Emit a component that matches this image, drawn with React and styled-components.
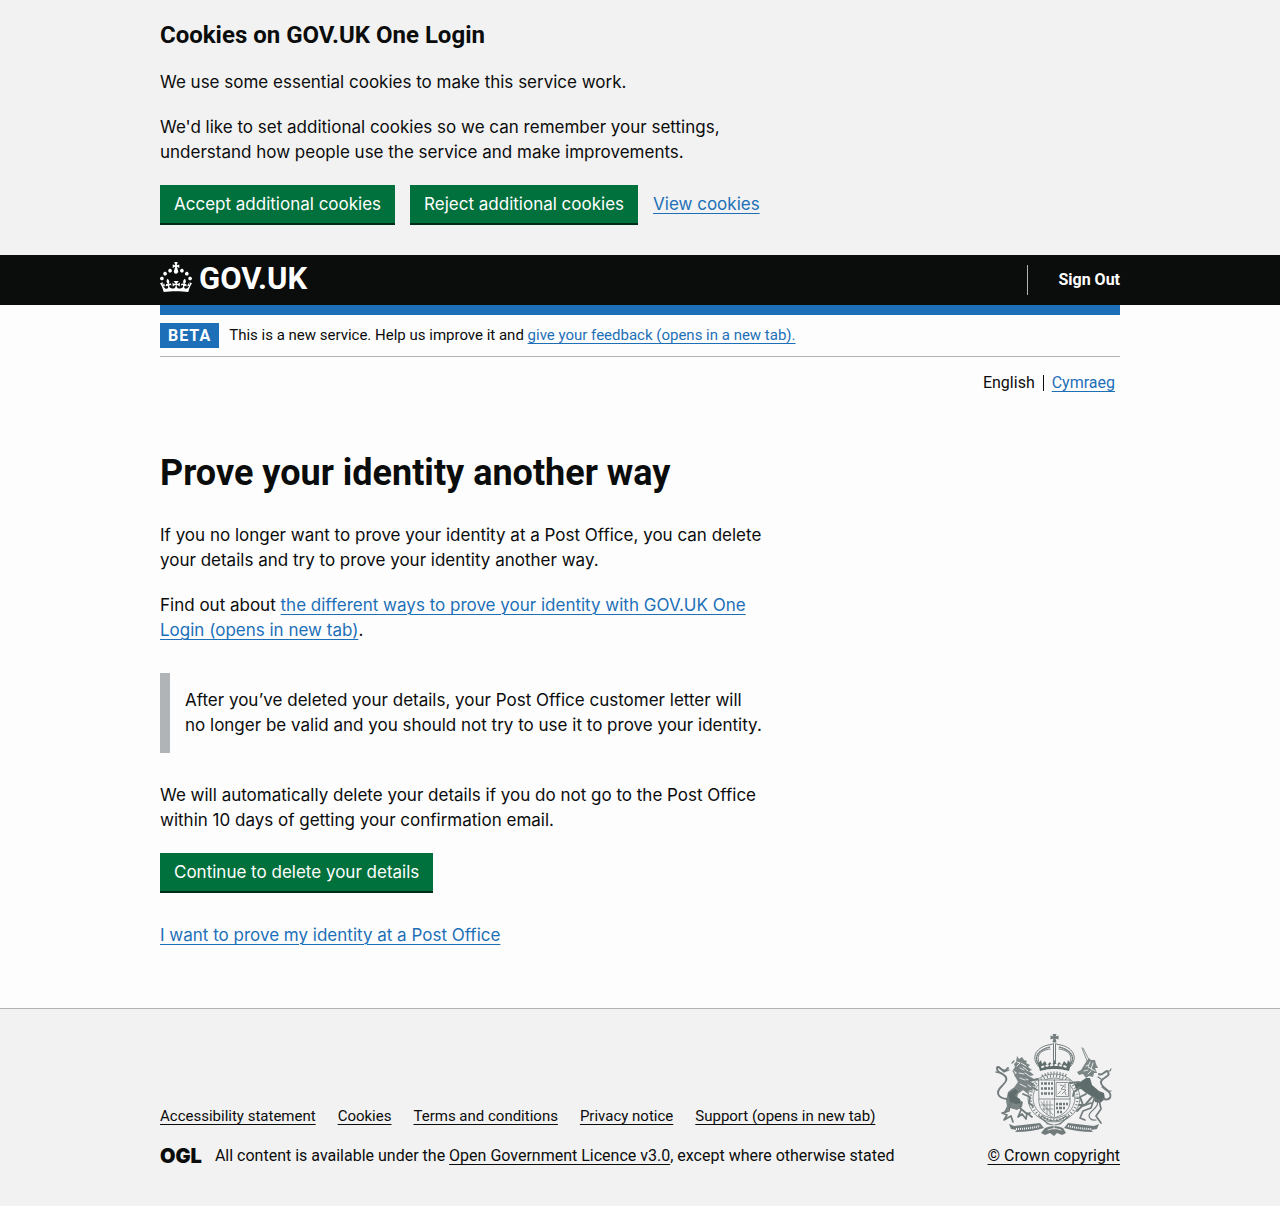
import React from "react";
import styled, { createGlobalStyle } from "styled-components";

const ink = "#0b0c0c";
const blue = "#1d70b8";
const green = "#00703c";
const grey = "#f2f2f2";
const line = "#b1b4b6";
const compactFont = 'Roboto, "Liberation Sans", sans-serif';

const GlobalStyle = createGlobalStyle`
  *, *::before, *::after { box-sizing: border-box; }
  body {
    margin: 0;
    background: ${grey};
    color: ${ink};
    font-family: Inter, "Liberation Sans", sans-serif;
    font-size: 17px;
    line-height: 25px;
  }
`;

const Page = styled.div`
  background: #fdfdfd;
`;

const Container = styled.div`
  max-width: 1020px;
  margin: 0 auto;
  padding: 0 30px;
`;

const Column = styled.div`
  max-width: 610px;
`;

const Paragraph = styled.p`
  margin: 0 0 20px;
`;

const Link = styled.a`
  color: ${(p) => (p.$dark ? ink : blue)};
  text-decoration: underline;
  text-decoration-thickness: 1px;
  text-underline-offset: 3px;
`;

const Button = styled.button`
  height: 38px;
  margin: 0 0 2px;
  padding: 0 14px;
  border: 0;
  background: ${green};
  color: #fff;
  box-shadow: 0 2px 0 #002d18;
  font: inherit;
  cursor: pointer;
`;

const CookieBanner = styled.section`
  padding: 20px 0 30px;
  background: ${grey};
`;

const BannerTitle = styled.h2`
  margin: 0 0 20px;
  font-family: ${compactFont};
  font-size: 24px;
  line-height: 30px;
  font-weight: 700;
`;

const ButtonRow = styled.div`
  display: flex;
  flex-wrap: wrap;
  align-items: baseline;
  gap: 15px;
`;

const Header = styled.header`
  background: ${ink};
  font-family: ${compactFont};
`;

const HeaderRow = styled.div`
  display: flex;
  align-items: center;
  justify-content: space-between;
  height: 50px;
`;

const Logo = styled.a`
  display: flex;
  align-items: flex-start;
  gap: 7px;
  height: 30px;
  margin-bottom: 6px;
  color: #fff;
  font-size: 31px;
  line-height: 34px;
  font-weight: 700;
  text-decoration: none;
`;

const HeaderNav = styled.nav`
  padding: 5px 0 5px 30px;
  border-left: 1px solid ${line};
  font-size: 16px;
  line-height: 20px;
  font-weight: 700;
`;

const NavLink = styled.a`
  color: #fff;
  text-decoration: none;
`;

const BlueBar = styled.div`
  height: 10px;
  background: ${blue};
`;

const PhaseBanner = styled.div`
  display: flex;
  align-items: center;
  gap: 10px;
  padding: 8px 0;
  border-bottom: 1px solid ${line};
  font-family: ${compactFont};
  font-size: 15px;
`;

const Tag = styled.strong`
  padding: 0 8px;
  background: ${blue};
  color: #fff;
  font-size: 16px;
  line-height: 25px;
  letter-spacing: 1px;
  text-transform: uppercase;
`;

const LanguageNav = styled.nav`
  display: flex;
  justify-content: flex-end;
  padding: 18px 5px 0 0;
  font-family: ${compactFont};
  font-size: 16px;
  line-height: 16px;
`;

const Language = styled.span`
  & + & {
    margin-left: 8px;
    padding-left: 8px;
    border-left: 1px solid ${ink};
  }
`;

const Main = styled.main`
  padding: 62px 0 60px;
`;

const Title = styled.h1`
  margin: 0 0 30px;
  font-family: ${compactFont};
  font-size: 36px;
  line-height: 40px;
  font-weight: 700;
`;

const Inset = styled.div`
  margin: 30px 0;
  padding: 15px 0 15px 15px;
  border-left: 10px solid ${line};
`;

const ButtonBlock = styled.div`
  display: flex;
  margin-bottom: 30px;
`;

const LastParagraph = styled.p`
  margin: 0;
`;

const Footer = styled.footer`
  padding: 25px 0 40px;
  border-top: 1px solid ${line};
  background: ${grey};
  font-family: ${compactFont};
  font-size: 16px;
  line-height: 20px;
`;

const FooterRow = styled.div`
  display: flex;
  flex-wrap: wrap;
  align-items: flex-end;
  justify-content: space-between;
  gap: 30px;
`;

const FooterLinks = styled.ul`
  display: flex;
  flex-wrap: wrap;
  gap: 10px 22px;
  margin: 0 0 20px;
  padding: 0;
  font-size: 15px;
  list-style: none;
`;

const Licence = styled.div`
  display: flex;
  align-items: center;
  gap: 13px;
`;

const Ogl = styled.span`
  font-family: Inter, sans-serif;
  font-size: 20px;
  line-height: 20px;
  font-weight: 900;
`;

const Copyright = styled(Link)`
  display: flex;
  flex-direction: column;
  align-items: center;
  gap: 10px;
`;

function Crown() {
  return (
    <svg width="32" height="30" viewBox="0 0 32 30" fill="#fff" aria-hidden="true">
      <path d="M22.6 10.4c-1 .4-2-.1-2.4-1-.4-.9.1-2 1-2.4.9-.4 2 .1 2.4 1s-.1 2-1 2.4m4.9 3c-1 .4-2-.1-2.4-1-.4-.9.1-2 1-2.4.9-.4 2 .1 2.4 1s0 2-1 2.4m3.3 4.8c-1 .4-2-.1-2.4-1-.4-.9.1-2 1-2.4.9-.4 2 .1 2.4 1s-.1 2-1 2.4M17 4.700l2.300 1.200V2.500l-2.300.7-.2-.2.9-3h-3.400l.9 3-.2.2c-.1.1-2.300-.7-2.300-.7v3.400L15 4.700c.1.1.1.2.2.2l-1.300 4c-.1.2-.1.4-.1.6 0 1.100.8 2 1.900 2.200h.7c1-.2 1.900-1.100 1.900-2.100 0-.2 0-.4-.1-.6l-1.300-4c-.1-.2 0-.2.1-.3m-7.600 5.700c.9.4 2-.1 2.400-1 .4-.9-.1-2-1-2.400-.9-.4-2 .1-2.400 1s0 2 1 2.400m-5 3c.9.4 2-.1 2.400-1 .4-.9-.1-2-1-2.400-.9-.4-2 .1-2.400 1s.1 2 1 2.400m-3.200 4.800c.9.4 2-.1 2.400-1 .4-.9-.1-2-1-2.400-.9-.4-2 .1-2.400 1s0 2 1 2.400m14.800 11c4.4 0 8.6.3 12.3.8 1.1-4.5 2.4-7 3.7-8.8l-2.5-.9c.2 1.3.3 1.9 0 2.7-.4-.4-.8-1.1-1.1-2.3l-1.2 4c.7-.5 1.3-.8 2-.9-1.1 2.5-2.6 3.1-3.5 3-1.1-.2-1.7-1.2-1.5-2.1.3-1.2 1.5-1.5 2.1-.1 1.1-2.3-.8-3-2-2.3 1.9-1.9 2.1-3.5.6-5.6-2.1 1.6-2.1 3.2-1.2 5.5-1.2-1.4-3.2-.6-2.5 1.6.9-1.4 2.1-.5 1.9.8-.2 1.1-1.7 2.1-3.5 1.9-2.7-.2-2.9-2.1-2.9-3.6.7-.1 1.9.5 2.9 1.9l.4-4.3c-1.1 1.1-2.1 1.4-3.2 1.4.4-1.2 2.1-3 2.1-3h-5.4s1.7 1.9 2.1 3c-1.1 0-2.1-.2-3.2-1.4l.4 4.3c1-1.4 2.2-2 2.9-1.9-.1 1.5-.2 3.4-2.9 3.6-1.9.2-3.4-.8-3.5-1.9-.2-1.3 1-2.2 1.9-.8.7-2.3-1.2-3-2.5-1.6.9-2.2.9-3.9-1.2-5.5-1.5 2-1.3 3.7.6 5.6-1.2-.7-3.1 0-2 2.3.6-1.4 1.8-1.1 2.1.1.2.9-.3 1.9-1.5 2.1-.9.2-2.4-.5-3.5-3 .6 0 1.2.3 2 .9l-1.2-4c-.3 1.1-.7 1.9-1.1 2.3-.3-.8-.2-1.4 0-2.7l-2.9.9C1.3 23 2.6 25.5 3.7 30c3.7-.5 7.9-.8 12.3-.8" />
    </svg>
  );
}

function CoatOfArms() {
  return (
    <svg width="118" height="102" viewBox="0 0 118 102" fill="none" stroke="#727b7c" strokeWidth="1" strokeLinejoin="round" strokeLinecap="round" aria-hidden="true">
      {/* crown */}
      <g>
        <path d="M57.500 0h4l-1 2.500 3-1v4l-3-1 1 3.500h-4l1-3.500-3 1v-4l3 1z" fill="#727b7c" stroke="none" />
        <path d="M45 34C35 25 40 14 53 11q5 0 6.500-3 1.500 3 6.500 3c13 3 18 14 8 23" />
        <path d="M47 32c-8-8-3-16 8-17M72 32c8-8 3-16-8-17" />
        <path d="M46 33c-9-8-4-17 9-20M73 33c9-8 4-17-9-20" strokeWidth="1.500" strokeDasharray="1 1.500" />
        <path d="M58.500 10v18M60.500 10v18" />
        <path d="M42 26l2 3 2-3 1 4 3-3 2 4 3-3 2 3 2.500-5 2.500 5 2-3 3 3 2-4 3 3 1-4 2 3 2-3-3 11q-15-4-29 0z" fill="#5f6c6c" stroke="none" />
        <path d="M47 33q12-4 25 0" stroke="#f2f2f2" strokeWidth="2" strokeDasharray="1.500 3" />
        <path d="M46 37.500q13-4 27 0" stroke="#f2f2f2" strokeDasharray="3 2" />
      </g>
      {/* garter and shield */}
      <g>
        <path d="M47 42q12-6 25 0" strokeWidth="3" strokeDasharray="1 2" strokeLinecap="butt" />
        <ellipse cx="59" cy="64" rx="26" ry="24" strokeWidth=".8" />
        <ellipse cx="59" cy="64" rx="21" ry="20" strokeWidth=".8" />
        <ellipse cx="59" cy="64" rx="23.500" ry="22" strokeWidth="2.500" strokeDasharray="1 2.200" strokeLinecap="butt" />
        <path d="M44 46h31v23q-1 10-15.500 15Q45 79 44 69z" fill="#f2f2f2" strokeWidth=".8" />
        <path d="M59.500 46v37M44 65h31" strokeWidth=".8" />
        <path d="M46 49.500h12M46 54.500h12M46 59.500h12M61 70h12M61 74h10M62 78h5" strokeWidth="2.400" strokeDasharray="2 1 3 1" strokeLinecap="butt" />
        <path d="M61.500 48.500h12v14h-12zM65 51l4 1-3 3 5 1-4 4M66 57l-3 3M70 50v4M70 58l1 3" strokeWidth=".8" />
        <path d="M46 68l12 13M49 67v10M52 67v13M55 67v14M46 71h12M48 75h10" strokeWidth=".7" />
      </g>
      {/* lion */}
      <g>
        <path d="M22 22l2 3 3-2 2 3 3 1-1 2 4 2-2 2 4 3-3 1 5 4-4 1 5 4-4 1 5 5-5 0 2 5-4-1-1 4-5-4-5 4-1 5 6 3-1 5-5 3-7-2-4 5-2-1 3-6-1-5 2-9 6-5 4-5-2-4-2-3 3-2-4-3 2-3-1-3 2-2z" fill="#7b8585" stroke="none" />
        <path d="M13 60l7-5 3 2-3 5 5 3 1 4-5 1-6-2z" fill="#5f6c6c" stroke="none" />
        <path d="M22 28l3 1-3 3M25 34l4 2M26 29l5 3M28 33l5 4M24 39l5 1M30 39l6 4M25 44l5 2M31 45l6 3M25 50l6 3M33 51l5 3M18 54l3-4" stroke="#f2f2f2" strokeWidth=".9" />
        <path d="M34 47l9-2M37 53l5 3M28 60l7 3-1 6 4 3M26 68l-1 6 7 6 3-1" strokeWidth="1.800" />
        <path d="M15 69l-1 8-7 2 5 2-3 5 7-4 2 6M26 76l-3 7 4-3 4 5 1-6 5 4" strokeWidth="1.700" />
        <path d="M12 65C2 64 1 58 6 53s7-8 4-11-9-4-8-8 5 5 9 2l2-2" strokeWidth="1.900" />
        <path d="M1 38l5 1M4 33l5 5 5-2M19 27l-2 2M18 37l2 3" strokeWidth="1.300" />
      </g>
      {/* unicorn */}
      <g>
        <path d="M87 14l5 13M88 14l6 12" strokeWidth=".8" />
        <path d="M91 28l3-4 2 2 4 0 1 4 2 4-3 0 2 5-3 0-1 4-4-1-3 2-3-4-4 1-2-3 4-2z" fill="#7b8585" stroke="none" />
        <path d="M79 50l6-2 6-4 4 0 2 7 7 6 5 2 1 6-5 4-5-1-2-5-7-4-5-4-4 1z" fill="#5f6c6c" stroke="none" />
        <path d="M91 32l2-1M95 28l-2 5 4 2M98 29l-2 6 4 2M89 37l4-1M93 40l3-3" stroke="#f2f2f2" strokeWidth=".9" />
        <path d="M84 48l-9 1M85 53l-6 5-1 4M91 60l-6 3 3 8-6 6M97 63l-7 8-6 0" strokeWidth="1.900" />
        <path d="M104 66l2 9-5 7 5 7M99 65l-3 9-8 3-3 7 5 2M88 72l8-3" strokeWidth="1.700" />
        <path d="M108 65c8 2 10-4 4-9s-8-8-4-11 7-4 5-7-6 5-9 2" strokeWidth="1.900" />
        <path d="M111 37l4 0 1-2M106 45l-3-2M107 53l5 4 4 0M99 63c8 6 1 11-3 15s-1 9 5 8" strokeWidth="1.200" />
      </g>
      {/* compartment and motto ribbon */}
      <g>
        <path d="M47 82q12 10 24 0M44 82l9 8M74 82l-9 8M52 89q7 4 14 0" strokeWidth="1.200" />
        <path d="M14 90l5 2 26-3 4 5q-13 4-29 4l2-2-6-1zM104 90l-5 2-26-3-4 5q13 4 29 4l-2-2 6-1z" fill="#727b7c" stroke="none" />
        <path d="M21 95q12 0 24-3M73 92q12 3 24 3" stroke="#f2f2f2" strokeWidth="2" strokeDasharray="1 1" strokeLinecap="butt" />
        <path d="M50 94q9-4 18 0l3 5-4 2-5-2-3 3-4-3-5 2-4-2z" fill="#727b7c" stroke="none" />
        <path d="M53 96q6-3 13 0M59 88v7" stroke="#f2f2f2" strokeWidth=".9" />
      </g>
    </svg>
  );
}

const footerLinks = [
  "Accessibility statement",
  "Cookies",
  "Terms and conditions",
  "Privacy notice",
  "Support (opens in new tab)",
];

export default function App() {
  return (
    <Page>
      <GlobalStyle />
      <CookieBanner aria-label="Cookies on GOV.UK One Login">
        <Container>
          <Column>
            <BannerTitle>Cookies on GOV.UK One Login</BannerTitle>
            <Paragraph>We use some essential cookies to make this service work.</Paragraph>
            <Paragraph>
              We'd like to set additional cookies so we can remember your settings, understand how people use the service and make improvements.
            </Paragraph>
          </Column>
          <ButtonRow>
            <Button type="button">Accept additional cookies</Button>
            <Button type="button">Reject additional cookies</Button>
            <Link href="#cookies">View cookies</Link>
          </ButtonRow>
        </Container>
      </CookieBanner>

      <Header>
        <Container>
          <HeaderRow>
            <Logo href="#home">
              <Crown />
              <span>GOV.UK</span>
            </Logo>
            <HeaderNav>
              <NavLink href="#sign-out">Sign Out</NavLink>
            </HeaderNav>
          </HeaderRow>
        </Container>
      </Header>

      <Container>
        <BlueBar />
        <PhaseBanner>
          <Tag>Beta</Tag>
          <span>
            This is a new service. Help us improve it and{" "}
            <Link href="#feedback">give your feedback (opens in a new tab).</Link>
          </span>
        </PhaseBanner>
        <LanguageNav>
          <Language>English</Language>
          <Language>
            <Link href="#cy" lang="cy">Cymraeg</Link>
          </Language>
        </LanguageNav>
        <Main>
          <Column>
            <Title>Prove your identity another way</Title>
            <Paragraph>
              If you no longer want to prove your identity at a Post Office, you can delete your details and try to prove your identity another way.
            </Paragraph>
            <Paragraph>
              Find out about{" "}
              <Link href="#ways">the different ways to prove your identity with GOV.UK One Login (opens in new tab)</Link>.
            </Paragraph>
            <Inset>
              After you’ve deleted your details, your Post Office customer letter will no&nbsp;longer be valid and you should not try to use it to prove your identity.
            </Inset>
            <Paragraph>
              We will automatically delete your details if you do not go to the Post Office within 10 days of getting your confirmation email.
            </Paragraph>
            <ButtonBlock>
              <Button type="button">Continue to delete your details</Button>
            </ButtonBlock>
            <LastParagraph>
              <Link href="#post-office">I want to prove my identity at a Post Office</Link>
            </LastParagraph>
          </Column>
        </Main>
      </Container>

      <Footer>
        <Container>
          <FooterRow>
            <div>
              <FooterLinks>
                {footerLinks.map((label) => (
                  <li key={label}>
                    <Link $dark href="#footer">{label}</Link>
                  </li>
                ))}
              </FooterLinks>
              <Licence>
                <Ogl>OGL</Ogl>
                <span>
                  All content is available under the{" "}
                  <Link $dark href="#licence">Open Government Licence v3.0</Link>, except where otherwise stated
                </span>
              </Licence>
            </div>
            <Copyright $dark href="#copyright">
              <CoatOfArms />
              <span>© Crown copyright</span>
            </Copyright>
          </FooterRow>
        </Container>
      </Footer>
    </Page>
  );
}
